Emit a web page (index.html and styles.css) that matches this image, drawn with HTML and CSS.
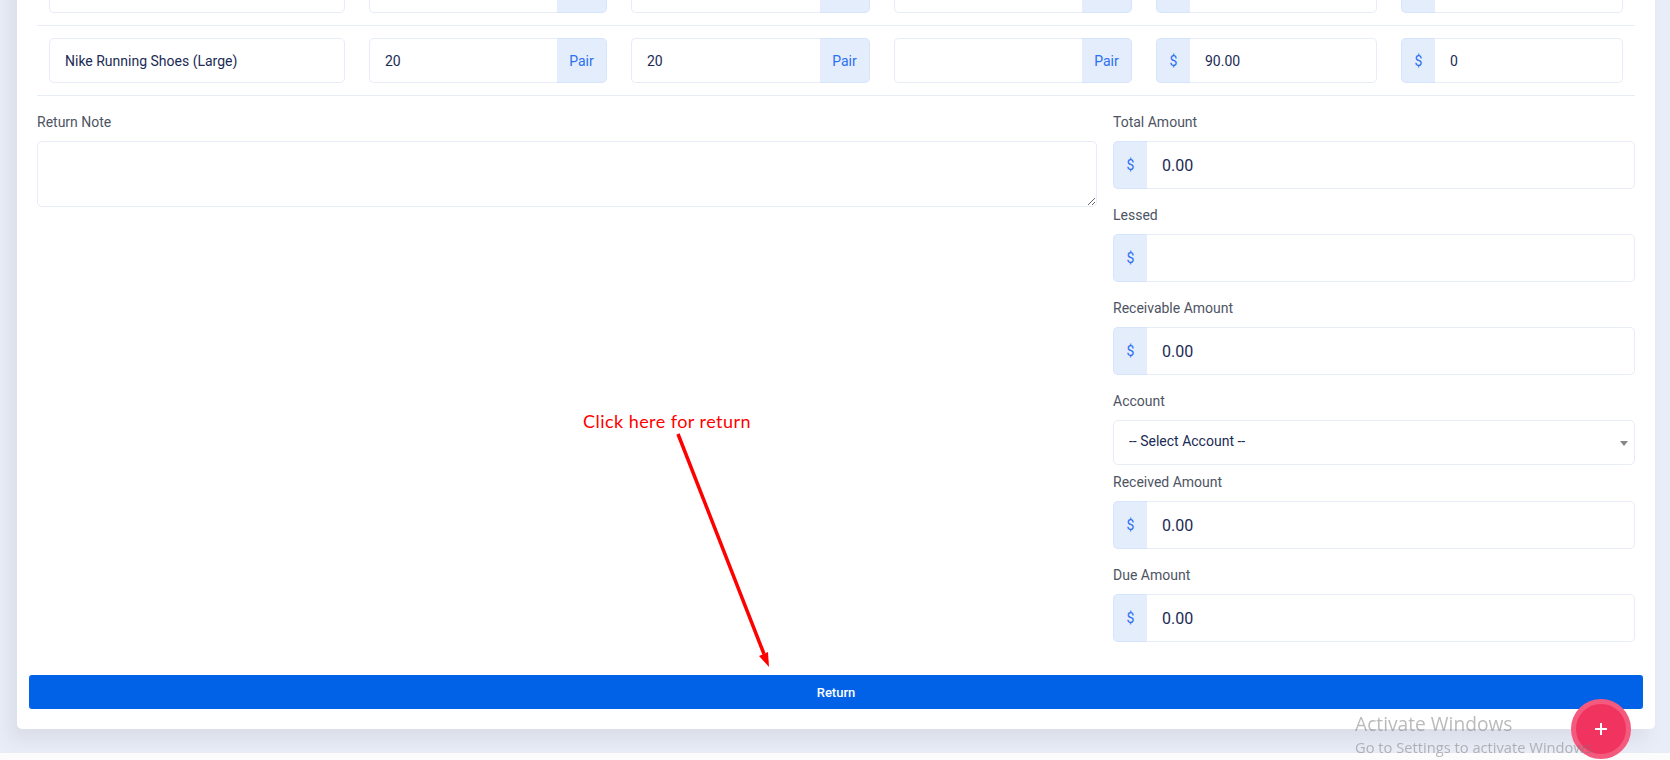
FILE: index.html
```html
<!DOCTYPE html>
<html lang="en">
<head>
    <meta charset="UTF-8">
    <meta name="viewport" content="width=device-width, initial-scale=1.0">
    <title>Purchase Return</title>
    <link rel="stylesheet" href="styles.css">
</head>
<body>
    <div class="page">
        <form class="card">
            <div class="item-row">
                <input class="control" type="text">
                <div class="input-group"><input class="control" type="text"><span class="addon addon-unit"></span></div>
                <div class="input-group"><input class="control" type="text"><span class="addon addon-unit"></span></div>
                <div class="input-group"><input class="control" type="text"><span class="addon addon-unit"></span></div>
                <div class="input-group"><span class="addon addon-money"></span><input class="control" type="text"></div>
                <div class="input-group"><span class="addon addon-money"></span><input class="control" type="text"></div>
            </div>
            <div class="item-row">
                <input class="control" type="text" value="Nike Running Shoes (Large)">
                <div class="input-group"><input class="control" type="text" value="20"><span class="addon addon-unit">Pair</span></div>
                <div class="input-group"><input class="control" type="text" value="20"><span class="addon addon-unit">Pair</span></div>
                <div class="input-group"><input class="control" type="text"><span class="addon addon-unit">Pair</span></div>
                <div class="input-group"><span class="addon addon-money">$</span><input class="control control-money" type="text" value="90.00"></div>
                <div class="input-group"><span class="addon addon-money">$</span><input class="control control-money" type="text" value="0"></div>
            </div>

            <div class="summary">
                <div class="note">
                    <label class="field-label" for="returnNote">Return Note</label>
                    <textarea class="note-input" id="returnNote"></textarea>
                </div>
                <div class="totals">
                    <div class="field">
                        <label class="field-label">Total Amount</label>
                        <div class="input-group amount"><span class="addon addon-money">$</span><input class="control control-money" type="text" value="0.00"></div>
                    </div>
                    <div class="field">
                        <label class="field-label">Lessed</label>
                        <div class="input-group amount"><span class="addon addon-money">$</span><input class="control control-money" type="text"></div>
                    </div>
                    <div class="field">
                        <label class="field-label">Receivable Amount</label>
                        <div class="input-group amount"><span class="addon addon-money">$</span><input class="control control-money" type="text" value="0.00"></div>
                    </div>
                    <div class="field field-select">
                        <label class="field-label">Account</label>
                        <div class="select-wrap">
                            <select class="account-select">
                                <option>-- Select Account --</option>
                            </select>
                        </div>
                    </div>
                    <div class="field">
                        <label class="field-label">Received Amount</label>
                        <div class="input-group amount"><span class="addon addon-money">$</span><input class="control control-money" type="text" value="0.00"></div>
                    </div>
                    <div class="field">
                        <label class="field-label">Due Amount</label>
                        <div class="input-group amount"><span class="addon addon-money">$</span><input class="control control-money" type="text" value="0.00"></div>
                    </div>
                </div>
            </div>

            <button class="return-btn" type="button">Return</button>

            <!-- annotation drawn over the screenshot -->
            <span class="callout-text">Click here for return</span>
            <svg class="callout-arrow" width="110" height="250" viewBox="0 0 110 250">
                <line x1="10" y1="10" x2="96" y2="230" stroke="#ff0000" stroke-width="3.5"></line>
                <polygon points="101,243 91,232 100,228" fill="#ff0000"></polygon>
            </svg>
        </form>
    </div>

    <button class="fab" type="button">
        <svg width="14" height="14" viewBox="0 0 14 14">
            <path d="M7 1v12M1 7h12" stroke="#fff" stroke-width="2"></path>
        </svg>
    </button>

    <div class="watermark">
        <div class="watermark-title">Activate Windows</div>
        <div class="watermark-sub">Go to Settings to activate Windows.</div>
    </div>
</body>
</html>
```

FILE: styles.css
```css
* {
    box-sizing: border-box;
}
html, body {
    height: 760px;
    margin: 0;
    overflow: hidden;
}
body {
    font-family: Roboto, sans-serif;
    font-size: 13px;
    color: #031b4e;
    background-color: #fcfcfd;
}
.page {
    height: 753px;
    background-color: #e9edf8;
    overflow: hidden;
    padding: 0 15px 0 17px;
}
.card {
    position: relative;
    margin-top: -44px;
    padding: 0 12px 20px;
    background-color: #fff;
    border-radius: 0 0 5px 5px;
    box-shadow: -8px 12px 18px 0 #dadee8;
}
.item-row {
    display: grid;
    grid-template-columns: 296px 238px 239px 238px 221px 222px;
    column-gap: 24px;
    margin: 0 8px;
    padding: 12px 12px;
    border-bottom: 1px solid #e8ecf5;
}
.input-group {
    display: flex;
    height: 45px;
}
.control {
    flex: 1;
    min-width: 0;
    width: 100%;
    height: 45px;
    padding: 0 15px;
    font-family: Roboto, sans-serif;
    font-size: 14px;
    color: #1a2b55;
    background-color: #fff;
    border: 1px solid #e8ecf7;
    border-radius: 5px;
    outline: none;
}
.addon {
    display: flex;
    align-items: center;
    justify-content: center;
    flex: none;
    font-size: 14px;
    color: #2c6ff0;
    background-color: #e3edfc;
    border: 1px solid #d6e5fb;
}
.addon-unit {
    width: 50px;
    border-left: 0;
    border-radius: 0 5px 5px 0;
}
.addon-money {
    width: 34px;
    border-right: 0;
    border-radius: 5px 0 0 5px;
}
.input-group .control:first-child {
    border-right: 0;
    border-radius: 5px 0 0 5px;
}
.input-group .addon:first-child + .control {
    border-left: 0;
    border-radius: 0 5px 5px 0;
}
.summary {
    display: grid;
    grid-template-columns: 1fr 522px;
    column-gap: 16px;
    margin: 0 8px;
    padding-top: 16px;
}
.field-label {
    display: block;
    height: 20px;
    line-height: 20px;
    margin-bottom: 9px;
    font-size: 14px;
    color: #4d5463;
}
.note-input {
    display: block;
    width: 100%;
    height: 66px;
    border: 1px solid #e8ecf7;
    border-radius: 5px;
    outline: none;
}
.field {
    margin-bottom: 16px;
}
.field-select {
    margin-bottom: 7px;
}
.amount, .amount .control {
    height: 48px;
}
.amount .control {
    font-size: 16px;
}
.select-wrap {
    position: relative;
}
.select-wrap::after {
    content: "";
    position: absolute;
    top: 21px;
    right: 7px;
    border-left: 4px solid transparent;
    border-right: 4px solid transparent;
    border-top: 5px solid #888;
}
.account-select {
    display: block;
    width: 100%;
    height: 45px;
    padding: 0 15px 4px;
    font-family: Roboto, sans-serif;
    font-size: 14px;
    color: #1a2b55;
    background-color: #fff;
    border: 1px solid #e8ecf7;
    border-radius: 5px;
    outline: none;
    appearance: none;
}
.return-btn {
    display: block;
    width: 100%;
    height: 34px;
    margin-top: 17px;
    font-family: Roboto, sans-serif;
    font-size: 13px;
    font-weight: 500;
    color: #fff;
    background-color: #0162e8;
    border: none;
    border-radius: 3px;
}
.callout-text {
    position: absolute;
    left: 566px;
    top: 454px;
    font-family: Lato, sans-serif;
    font-size: 18px;
    letter-spacing: 0.45px;
    color: #ff0000;
}
.callout-arrow {
    position: absolute;
    left: 651px;
    top: 468px;
}
.fab {
    position: fixed;
    right: 39px;
    bottom: 1px;
    width: 60px;
    height: 60px;
    display: flex;
    align-items: center;
    justify-content: center;
    background-color: #f1335f;
    border: 5px solid #f4597e;
    border-radius: 50%;
}
.watermark {
    position: fixed;
    left: 1355px;
    top: 711px;
    font-family: "Open Sans", sans-serif;
    color: rgba(120, 120, 120, 0.5);
}
.watermark-title {
    font-size: 19.2px;
    line-height: 26px;
}
.watermark-sub {
    font-size: 14.7px;
    line-height: 20px;
}
```
